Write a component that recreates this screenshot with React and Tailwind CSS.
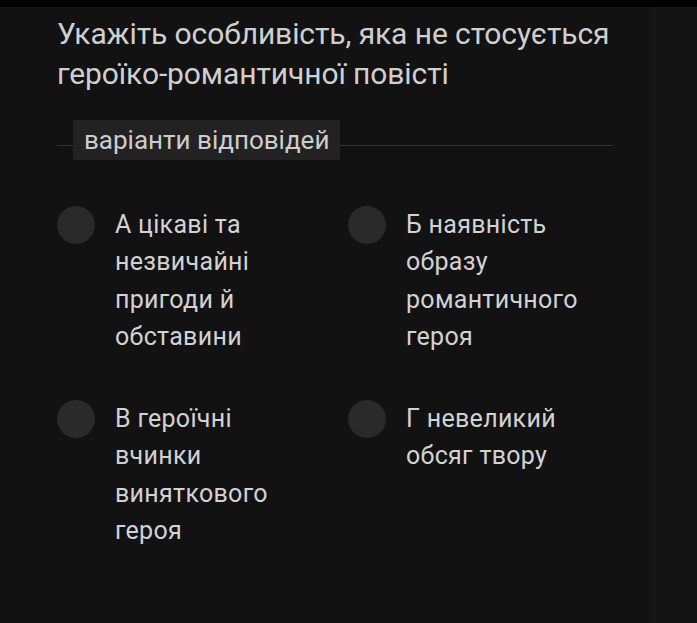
const options = [
  { id: "a", lines: ["А цікаві та", "незвичайні", "пригоди й", "обставини"] },
  { id: "b", lines: ["Б наявність", "образу", "романтичного", "героя"] },
  { id: "c", lines: ["В героїчні", "вчинки", "виняткового", "героя"] },
  { id: "d", lines: ["Г невеликий", "обсяг твору"] },
];

const Option = ({ lines }) => (
  <label className="flex items-start gap-[20px] cursor-pointer">
    <span className="w-[38px] h-[38px] shrink-0 rounded-full bg-[#2a2a2a]" />
    <span className="text-[25px] leading-[37.3px] text-[#d2d2d2] tracking-[0.3px]">
      {lines.map((l, i) => (
        <span key={i} className="block">{l}</span>
      ))}
    </span>
  </label>
);

export default function App() {
  return (
    <div className="w-[697px] h-[623px] bg-[#121212] flex flex-col overflow-hidden" style={{ fontFamily: "Roboto, 'Noto Sans', sans-serif" }}>
      <div className="h-[7px] bg-black shrink-0" />
      <div className="flex flex-1">
        <div className="w-[649px] pl-[57px] pr-[36px] pt-[7px]">
          <h1 className="text-[30px] leading-[40px] text-[#cfcfcf] font-normal tracking-[-0.1px]">
            Укажіть особливість, яка не стосується героїко-романтичної повісті
          </h1>
          <div className="mt-[26px] flex items-center">
            <div className="w-[16px] h-px bg-[#353535] mt-[10px]" />
            <div className="h-[40px] px-[11px] flex items-center bg-[#222222] text-[26px] text-[#cdcdcd]">
              варіанти відповідей
            </div>
            <div className="flex-1 h-px bg-[#353535] mt-[10px]" />
          </div>
          <div className="mt-[46px] grid grid-cols-[291px_1fr] gap-y-[45px]">
            {options.map((o) => (
              <Option key={o.id} lines={o.lines} />
            ))}
          </div>
        </div>
        <div className="flex-1 bg-[#141414]" />
      </div>
    </div>
  );
}
